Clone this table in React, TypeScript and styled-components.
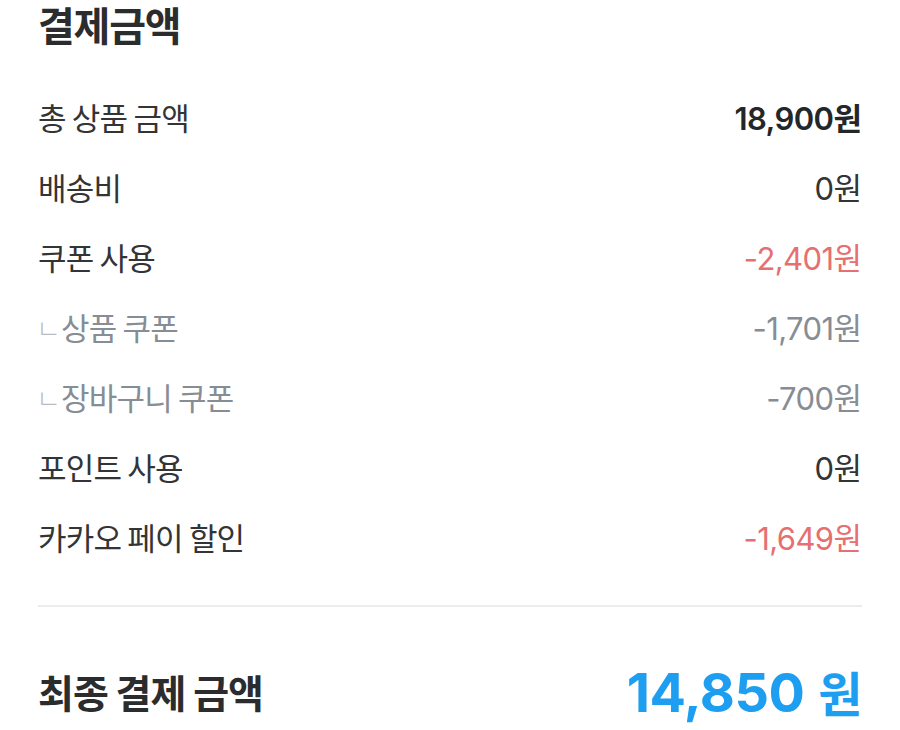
import React from "react";
import styled, { createGlobalStyle } from "styled-components";

const Global = createGlobalStyle`
  html, body { margin: 0; padding: 0; background: #ffffff; }
  body { font-family: "Noto Sans CJK KR", sans-serif; -webkit-font-smoothing: antialiased; }
`;

const Page = styled.div`
  width: 900px;
  box-sizing: border-box;
  padding: 0 38px;
  display: flex;
  flex-direction: column;
`;

const Title = styled.h1`
  margin: 0;
  font-family: "Noto Sans CJK KR", sans-serif;
  font-size: 40px;
  font-weight: 700;
  line-height: 48px;
  color: #2b2c2e;
  letter-spacing: -1.2px;
`;

const List = styled.div`
  display: flex;
  flex-direction: column;
  margin-top: 33px;
`;

const Row = styled.div`
  height: 70px;
  display: flex;
  align-items: center;
  justify-content: space-between;
`;

type Tone = "dark" | "red" | "grey";

const toneColor: Record<Tone, string> = {
  dark: "#333436",
  red: "#e5706f",
  grey: "#868d94",
};

const Label = styled.div<{ $tone: Tone }>`
  display: flex;
  align-items: center;
  font-family: "Noto Sans CJK KR", sans-serif;
  font-size: 31px;
  font-weight: 400;
  letter-spacing: -0.8px;
  color: ${(p) => toneColor[p.$tone]};
`;

const Marker = styled.span`
  font-family: "Noto Sans CJK KR", sans-serif;
  font-size: 27px;
  font-weight: 200;
  color: #b9bdc2;
  width: 25px;
  margin-top: 2px;
  margin-left: -2px;
`;

const Value = styled.div<{ $tone: Tone; $bold?: boolean }>`
  font-family: "Inter", "Noto Sans CJK KR", sans-serif;
  font-size: 31px;
  font-weight: ${(p) => (p.$bold ? 600 : 400)};
  letter-spacing: -0.6px;
  color: ${(p) => (p.$bold ? "#252628" : toneColor[p.$tone])};
`;

const Won = styled.span`
  font-family: "Noto Sans CJK KR", sans-serif;
  letter-spacing: 0;
`;

const Divider = styled.hr`
  border: none;
  height: 2px;
  background: #ececec;
  margin: 34px 0 0;
`;

const TotalWrap = styled.div`
  height: 120px;
  display: flex;
  flex-direction: column;
  justify-content: flex-start;
  padding-top: 49px;
  box-sizing: border-box;
`;

const TotalLabel = styled.div`
  font-family: "Noto Sans CJK KR", sans-serif;
  font-size: 39px;
  font-weight: 700;
  letter-spacing: -1px;
  color: #2b2c2e;
`;

const TotalValue = styled.div`
  font-family: "Inter", "Noto Sans CJK KR", sans-serif;
  font-size: 54px;
  font-weight: 700;
  letter-spacing: -0.5px;
  color: #1d9ef0;
  display: flex;
  align-items: baseline;
  gap: 14px;
`;

const TotalWon = styled.span`
  font-family: "Noto Sans CJK KR", sans-serif;
  font-size: 48px;
  font-weight: 700;
`;

type Item = { label: string; amount: string; tone: Tone; sub?: boolean; bold?: boolean };

const items: Item[] = [
  { label: "총 상품 금액", amount: "18,900", tone: "dark", bold: true },
  { label: "배송비", amount: "0", tone: "dark" },
  { label: "쿠폰 사용", amount: "-2,401", tone: "red" },
  { label: "상품 쿠폰", amount: "-1,701", tone: "grey", sub: true },
  { label: "장바구니 쿠폰", amount: "-700", tone: "grey", sub: true },
  { label: "포인트 사용", amount: "0", tone: "dark" },
  { label: "카카오 페이 할인", amount: "-1,649", tone: "red" },
];

export default function App() {
  return (
    <>
      <Global />
      <Page>
        <Title>결제금액</Title>
        <List>
          {items.map((it) => (
            <Row key={it.label}>
              <Label $tone={it.sub ? "grey" : "dark"}>
                {it.sub && <Marker>ㄴ</Marker>}
                {it.label}
              </Label>
              <Value $tone={it.tone} $bold={it.bold}>
                {it.amount}
                <Won>원</Won>
              </Value>
            </Row>
          ))}
        </List>
        <Divider />
        <TotalWrap>
          <Row>
            <TotalLabel>최종 결제 금액</TotalLabel>
            <TotalValue>
              14,850
              <TotalWon>원</TotalWon>
            </TotalValue>
          </Row>
        </TotalWrap>
      </Page>
    </>
  );
}
